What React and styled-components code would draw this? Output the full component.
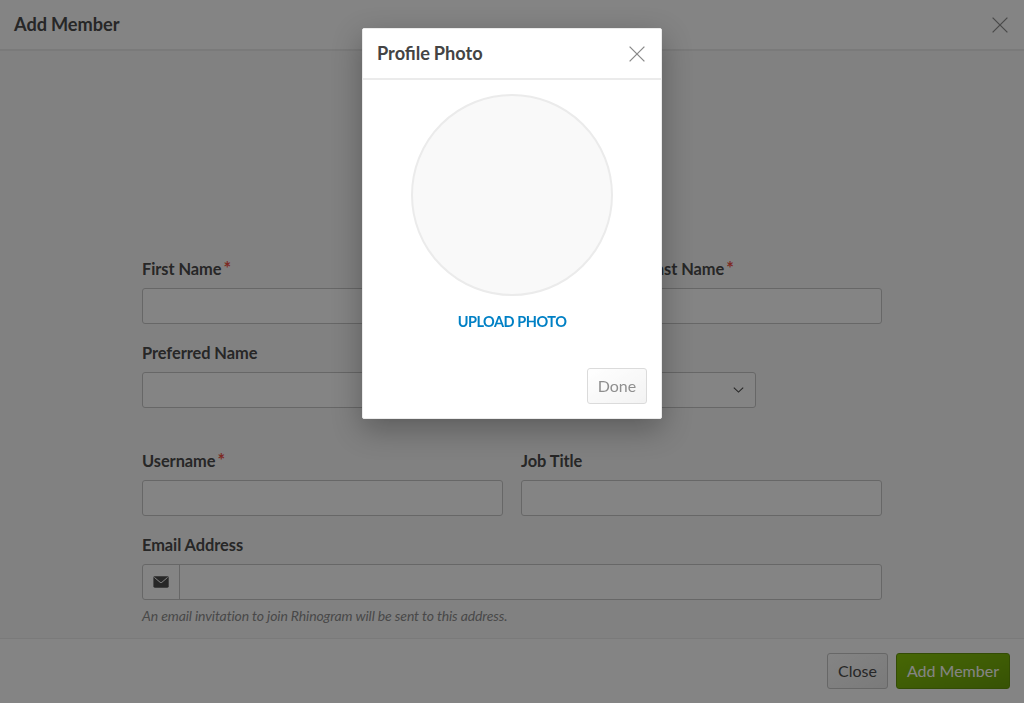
import React from "react";
import styled, { createGlobalStyle } from "styled-components";

const GlobalStyle = createGlobalStyle`
  *, *::before, *::after { box-sizing: border-box; }
  body {
    margin: 0;
    overflow: hidden;
    background: #f9f9f9;
    color: #444;
    font: 400 16px/24px Lato, sans-serif;
  }
`;

const Page = styled.div`
  display: flex;
  flex-direction: column;
  height: 100vh;
`;

const Header = styled.header`
  display: flex;
  flex: none;
  align-items: center;
  justify-content: space-between;
  height: 51px;
  padding: 0 14px 2px;
  border-bottom: 2px solid #ebebeb;
  background: #fff;
`;

const Title = styled.h1`
  margin: 0;
  font-size: 18.2px;
  font-weight: 700;
  line-height: 24px;
  word-spacing: -0.6px;
`;

const IconButton = styled.button`
  display: flex;
  margin: 2px 2px 0 0;
  padding: 0;
  border: 0;
  background: none;
  color: #8a8a8a;
`;

const Content = styled.main`
  flex: 1;
  min-height: 0;
  padding: 206px 142px 0;
`;

const FormRow = styled.div`
  display: grid;
  grid-template-columns: repeat(12, 1fr);
  column-gap: 18px;
  height: 67px;
  margin-bottom: ${(p) => p.$gap || 17}px;
`;

const Field = styled.div`
  display: flex;
  flex-direction: column;
  grid-column: span ${(p) => p.$span};
  min-width: 0;
`;

const Label = styled.label`
  height: 31px;
  font-size: 16.4px;
  font-weight: 700;
  letter-spacing: -0.06px;
  line-height: 24px;
  white-space: nowrap;
`;

const Required = styled.span`
  margin-left: 2px;
  color: #f04a3c;
  font-size: 18px;
  line-height: 1;
`;

const Input = styled.input`
  width: 100%;
  height: 36px;
  padding: 0 10px;
  border: 1px solid #c4c4c4;
  border-radius: 3px;
  background: #fff;
  font: inherit;
`;

const Select = styled.div`
  display: flex;
  align-items: center;
  justify-content: flex-end;
  height: 36px;
  padding-right: 11px;
  border: 1px solid #c4c4c4;
  border-radius: 3px;
  background: #fff;
`;

const InputGroup = styled.div`
  display: flex;
  height: 36px;
  overflow: hidden;
  border: 1px solid #c4c4c4;
  border-radius: 3px;
  background: #fff;
`;

const Addon = styled.span`
  display: flex;
  flex: none;
  align-items: center;
  justify-content: center;
  width: 37px;
  border-right: 1px solid #c4c4c4;
`;

const GroupInput = styled.input`
  flex: 1;
  border: 0;
  background: transparent;
  font: inherit;
`;

const Hint = styled.p`
  margin: -12px 0 0;
  color: #888;
  font-size: 14px;
  font-style: italic;
  letter-spacing: -0.12px;
  line-height: 22px;
`;

const Footer = styled.footer`
  display: flex;
  flex: none;
  align-items: flex-start;
  justify-content: flex-end;
  gap: 8px;
  height: 65px;
  padding: 14px 14px 0;
  border-top: 1px solid #ebebeb;
  background: #fff;
`;

const Button = styled.button`
  height: 36px;
  padding: 0 10px;
  border: 1px solid ${(p) => (p.$primary ? "#5c8f00" : "#c4c4c4")};
  border-radius: 3px;
  background: ${(p) =>
    p.$primary
      ? "linear-gradient(to bottom right, #84c400, #649b00)"
      : "linear-gradient(to bottom right, #fff, #ebebeb)"};
  color: ${(p) => (p.$primary ? "#fff" : "#444")};
  font: inherit;
  opacity: ${(p) => (p.disabled ? 0.6 : 1)};
`;

const DoneButton = styled(Button)`
  width: 60px;
  padding: 0;
`;

const Overlay = styled.div`
  position: fixed;
  inset: 0;
  display: flex;
  align-items: flex-start;
  justify-content: center;
  padding-top: 28px;
  background: rgba(10, 10, 10, 0.5);
`;

const Modal = styled.section`
  width: 300px;
  height: 391px;
  border: 1px solid #ebebeb;
  border-radius: 2px;
  background: #fff;
  box-shadow: 0 10px 30px rgba(0, 0, 0, 0.3);
`;

const ModalBody = styled.div`
  display: flex;
  flex-direction: column;
  align-items: center;
  padding-top: 14px;
`;

const Avatar = styled.div`
  width: 202px;
  height: 202px;
  border: 2px solid #ebebeb;
  border-radius: 50%;
  background: #f9f9f9;
`;

const UploadButton = styled.button`
  margin-top: 14px;
  padding: 0;
  border: 0;
  background: none;
  color: #0080c5;
  font: 700 14.5px/24px Lato, sans-serif;
  letter-spacing: -0.48px;
  text-transform: uppercase;
`;

const ModalActions = styled.div`
  display: flex;
  justify-content: flex-end;
  padding: 34px 14px 0;
`;

const CloseIcon = () => (
  <svg width="16" height="16" viewBox="0 0 16 16" fill="none" stroke="currentColor" strokeWidth="1.3">
    <path d="M.6.6l14.8 14.8M15.4.6L.6 15.4" />
  </svg>
);

const ChevronIcon = () => (
  <svg width="11" height="6" viewBox="0 0 11 6" fill="none" stroke="#444" strokeWidth="1.1">
    <path d="M.8.7l4.7 4.4L10.2.7" />
  </svg>
);

const MailIcon = () => (
  <svg width="16" height="12" viewBox="0 0 16 12">
    <rect x=".4" y=".3" width="15.3" height="11.4" rx="1.4" fill="#444" />
    <path d="M1.4 1.4l5.7 4.9q.9.7 1.8 0l5.7-4.9" fill="none" stroke="#fff" strokeWidth="1" />
  </svg>
);

const TextField = ({ label, span, required }) => (
  <Field $span={span}>
    <Label>
      {label}
      {required && <Required>*</Required>}
    </Label>
    <Input aria-label={label} />
  </Field>
);

export default function App() {
  return (
    <>
      <GlobalStyle />
      <Page>
        <Header>
          <Title>Add Member</Title>
          <IconButton aria-label="Close"><CloseIcon /></IconButton>
        </Header>
        <Content>
          <FormRow>
            <TextField label="First Name" span={4} required />
            <TextField span={4} />
            <TextField label="Last Name" span={4} required />
          </FormRow>
          <FormRow $gap={41}>
            <TextField label="Preferred Name" span={6} />
            <Field $span={4}>
              <Label />
              <Select><ChevronIcon /></Select>
            </Field>
          </FormRow>
          <FormRow>
            <TextField label="Username" span={6} required />
            <TextField label="Job Title" span={6} />
          </FormRow>
          <FormRow>
            <Field $span={12}>
              <Label>Email Address</Label>
              <InputGroup>
                <Addon><MailIcon /></Addon>
                <GroupInput aria-label="Email Address" />
              </InputGroup>
            </Field>
          </FormRow>
          <Hint>An email invitation to join Rhinogram will be sent to this address.</Hint>
        </Content>
        <Footer>
          <Button>Close</Button>
          <Button $primary>Add Member</Button>
        </Footer>
      </Page>
      <Overlay>
        <Modal role="dialog" aria-label="Profile Photo">
          <Header>
            <Title>Profile Photo</Title>
            <IconButton aria-label="Close"><CloseIcon /></IconButton>
          </Header>
          <ModalBody>
            <Avatar />
            <UploadButton>Upload Photo</UploadButton>
          </ModalBody>
          <ModalActions>
            <DoneButton disabled>Done</DoneButton>
          </ModalActions>
        </Modal>
      </Overlay>
    </>
  );
}
